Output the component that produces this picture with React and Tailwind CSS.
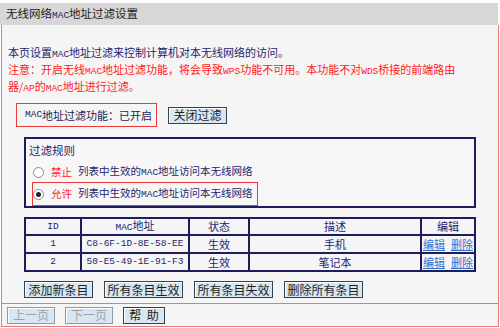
import React from 'react';

const rows = [
  { id: 1, mac: 'C8-6F-1D-8E-58-EE', state: '生效', desc: '手机' },
  { id: 2, mac: '50-E5-49-1E-91-F3', state: '生效', desc: '笔记本' },
];

// latin in the router UI is a narrow fixed-width face
const L = ({ children }) => (
  <span className="text-[9.5px] leading-none font-['Liberation_Mono',monospace]">{children}</span>
);

const Btn = ({ children, w, disabled }) => (
  <button
    className={`h-[17px] ${w} flex items-center justify-center whitespace-nowrap border bg-[#d6e6f3] text-[12px] leading-none shadow-[inset_1px_1px_0_#fff] ${
      disabled ? 'border-[#8c9aa6] text-[#9aa4ad]' : 'border-[#33424f] text-[#1e1e1e]'
    }`}
  >
    {children}
  </button>
);

const Radio = ({ checked }) => (
  <span className="w-[11px] h-[11px] shrink-0 rounded-full border border-[#8a8a8a] bg-white flex items-center justify-center">
    {checked && <span className="w-[5px] h-[5px] rounded-full bg-[#222]" />}
  </span>
);

export default function App() {
  return (
    <div className="w-[500px] h-[328px] bg-white pt-[3px] text-[11px] leading-none text-[#25256e] whitespace-nowrap font-['Noto_Sans_CJK_SC','Noto_Sans',sans-serif]">
      <div className="h-[22px] w-[498px] bg-[#d7d7d7] flex items-center pl-[6px] text-[11.5px] text-[#222]">
        无线网络<span className="text-[#25256e]"><L>MAC</L></span>地址过滤设置
      </div>

      <div className="ml-[1px] w-[498px] h-[302px] border-x border-b border-[#ec7575] bg-[#f5f5f5] flex flex-col overflow-hidden">
        <div className="h-[278px] shrink-0 pt-[19px]">
          <div className="pl-[6px] leading-[17px]">
            <div className="h-[17px]">本页设置<L>MAC</L>地址过滤来控制计算机对本无线网络的访问。</div>
            <div className="text-[#ff1a1a]">
              <div className="h-[17px]">注意：开启无线<L>MAC</L>地址过滤功能，将会导致<L>WPS</L>功能不可用。本功能不对<L>WDS</L>桥接的前端路由</div>
              <div className="h-[17px]">器/<L>AP</L>的<L>MAC</L>地址进行过滤。</div>
            </div>
          </div>

          <div className="mt-[8px] ml-[14px] flex items-center gap-[11px]">
            <div className="w-[141px] h-[24px] border border-[#f03a3a] flex items-center pl-[8px] text-[#1e1e4e]">
              <L>MAC</L>地址过滤功能：已开启
            </div>
            <Btn w="w-[59px]">关闭过滤</Btn>
          </div>

          <div className="mt-[10px] ml-[22px] w-[452px] h-[71px] border-2 border-[#1d1d5e] bg-[#f7f7f7] pl-[3px] pt-[5px] text-[10.5px]">
            <div className="h-[14px] flex items-center text-[11.5px]">过滤规则</div>
            <div className="mt-[7px] pl-[4px] flex items-center h-[14px]">
              <Radio />
              <span className="ml-[7px] text-[#ff1a1a]">禁止</span>
              <span className="ml-[6px]">列表中生效的<L>MAC</L>地址访问本无线网络</span>
            </div>
            <div className="mt-[3px] ml-[3px] w-[226px] h-[24px] border border-[#f03a3a] flex items-center">
              <Radio checked />
              <span className="ml-[7px] text-[#ff1a1a]">允许</span>
              <span className="ml-[6px]">列表中生效的<L>MAC</L>地址访问本无线网络</span>
            </div>
          </div>

          <div className="mt-[9px] ml-[22px] w-[452px] bg-[#1d1d5e] p-[2px] grid grid-cols-[54px_106px_58px_170px_1fr] gap-[2px]">
            {['ID', 'MAC地址', '状态', '描述', '编辑'].map((h) => (
              <div key={h} className="h-[15px] bg-[#f5f5f5] flex items-center justify-center">
                {h === 'MAC地址' ? (
                  <span><L>MAC</L>地址</span>
                ) : h === 'ID' ? (
                  <L>ID</L>
                ) : (
                  h
                )}
              </div>
            ))}
            {rows.map((r) => (
              <React.Fragment key={r.id}>
                <div className="h-[16px] bg-[#f5f5f5] flex items-center justify-center"><L>{r.id}</L></div>
                <div className="h-[16px] bg-[#f5f5f5] flex items-center justify-center"><L>{r.mac}</L></div>
                <div className="h-[16px] bg-[#f5f5f5] flex items-center justify-center">{r.state}</div>
                <div className="h-[16px] bg-[#f5f5f5] flex items-center justify-center">{r.desc}</div>
                <div className="h-[16px] bg-[#f5f5f5] flex items-center justify-center gap-[6px] text-[#2f6fd0] underline">
                  <span>编辑</span>
                  <span>删除</span>
                </div>
              </React.Fragment>
            ))}
          </div>

          <div className="mt-[9px] ml-[22px] flex gap-[11px]">
            <Btn w="w-[69px]">添加新条目</Btn>
            <Btn w="w-[79px]">所有条目生效</Btn>
            <Btn w="w-[79px]">所有条目失效</Btn>
            <Btn w="w-[79px]">删除所有条目</Btn>
          </div>
        </div>

        <div className="h-[23px] shrink-0 border-t border-[#ec7575] flex items-center pl-[5px] gap-[10px]">
          <Btn w="w-[48px]" disabled>上一页</Btn>
          <Btn w="w-[48px]" disabled>下一页</Btn>
          <Btn w="w-[42px]">帮&nbsp;&nbsp;助</Btn>
        </div>
      </div>
    </div>
  );
}
